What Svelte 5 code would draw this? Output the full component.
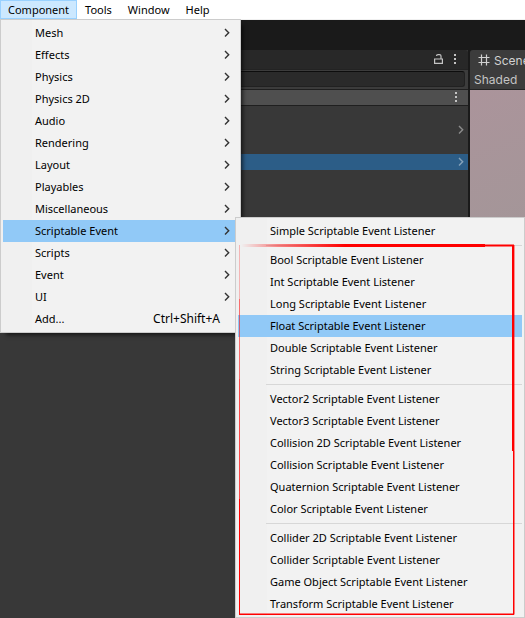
<script>
  const menuBar = ['Component', 'Tools', 'Window', 'Help'];

  const componentMenu = [
    'Mesh', 'Effects', 'Physics', 'Physics 2D', 'Audio', 'Rendering', 'Layout',
    'Playables', 'Miscellaneous', 'Scriptable Event', 'Scripts', 'Event', 'UI'
  ];

  const listenerGroups = [
    ['Simple'],
    ['Bool', 'Int', 'Long', 'Float', 'Double', 'String'],
    ['Vector2', 'Vector3', 'Collision 2D', 'Collision', 'Quaternion', 'Color'],
    ['Collider 2D', 'Collider', 'Game Object', 'Transform']
  ];

  let openItem = $state('Scriptable Event');
  let activeListener = $state('Float');
</script>

{#snippet dots()}
  <svg viewBox="0 0 4 12" width="4" height="12" aria-hidden="true">
    <path d="M1 0h2v2h-2zM1 4h2v2h-2zM1 8h2v2h-2z" fill="#c4c4c4" />
  </svg>
{/snippet}

{#snippet chevron()}
  <svg viewBox="0 0 6 10" width="6" height="10" aria-hidden="true">
    <path d="M1 1l3.700 3.700-3.700 3.700" fill="none" stroke="currentColor" stroke-width="1.400" />
  </svg>
{/snippet}

<div class="editor">
  <nav class="menubar" aria-label="Main menu">
    {#each menuBar as name}
      <button type="button" class:open={name === 'Component'}>{name}</button>
    {/each}
  </nav>

  <div class="workspace">
    <section class="hierarchy" aria-label="Hierarchy">
      <div class="tabs">
        <button type="button" aria-label="Lock">
          <svg viewBox="0 0 9 11" width="9" height="11" aria-hidden="true">
            <path d="M.6 5h7.800v4.400h-7.800zM7 5v-2.900q0-1.500-1.500-1.500h-1.500q-1.500 0-1.500 1.300" fill="none" stroke="#c4c4c4" stroke-width="1.200" />
          </svg>
        </button>
        <button type="button" aria-label="Panel options">{@render dots()}</button>
      </div>
      <div class="search"><input type="search" aria-label="Search hierarchy" /></div>
      <div class="scene-row">
        <button type="button" aria-label="Scene options">{@render dots()}</button>
      </div>
      <div class="objects">
        <div class="object"></div>
        <div class="object">{@render chevron()}</div>
        <div class="object"></div>
        <div class="object selected">{@render chevron()}</div>
      </div>
    </section>

    <section class="scene" aria-label="Scene view">
      <div class="scene-tab">
        <svg viewBox="0 0 12 12" width="12" height="12" aria-hidden="true">
          <path d="M3.500 .5v11M8.500 .5v11M.5 3.500h11M.5 8.500h11" fill="none" stroke="#d0d0d0" stroke-width="1.200" />
        </svg>
        <span>Scene</span>
      </div>
      <div class="shading">Shaded</div>
      <div class="view"></div>
    </section>
  </div>

  <div class="menu component-menu" role="menu">
    {#each componentMenu as name}
      <button type="button" role="menuitem" class:active={name === openItem} onclick={() => (openItem = name)}>
        <span>{name}</span>
        <span class="arrow">{@render chevron()}</span>
      </button>
    {/each}
    <button type="button" role="menuitem">
      <span>Add...</span>
      <span class="shortcut">Ctrl+Shift+A</span>
    </button>
  </div>

  <div class="menu listener-menu" role="menu">
    {#each listenerGroups as group, i}
      {#if i > 0}<hr />{/if}
      {#each group as kind}
        <button type="button" role="menuitem" class:active={kind === activeListener} onclick={() => (activeListener = kind)}>
          <span>{kind} Scriptable Event Listener</span>
        </button>
      {/each}
    {/each}
    <svg class="marker" viewBox="0 0 290 401" preserveAspectRatio="none" aria-hidden="true">
      <defs>
        <linearGradient id="fade" gradientUnits="userSpaceOnUse" x1="6" y1="0" x2="110" y2="0">
          <stop offset="0" stop-color="#f00" stop-opacity="0" />
          <stop offset="0.350" stop-color="#f00" stop-opacity="0.450" />
          <stop offset="1" stop-color="#f00" />
        </linearGradient>
      </defs>
      <path d="M6 27h244v3h-244z" fill="url(#fade)" />
      <path d="M250 27.500h29v2h-29zM277 28h2v206h-2z" fill="#f00" />
      <path d="M279 28h1v206h-1z" fill="#f00" opacity="0.400" />
      <path d="M278 234h1.500v163.500h-1.500z" fill="#f00" />
      <path d="M4 396.500h275v1.500h-275z" fill="#f00" />
      <path d="M4 28h1v54h-1z" fill="#f00" opacity="0.250" />
      <path d="M4 82h1v80h-1z" fill="#f00" opacity="0.550" />
      <path d="M4 162h1v120h-1z" fill="#f00" opacity="0.700" />
      <path d="M4 282h1v115h-1z" fill="#f00" />
    </svg>
  </div>
</div>

<style>
  :global(body) {
    margin: 0;
    background: #383838;
  }

  .editor {
    position: relative;
    display: flex;
    flex-direction: column;
    min-height: 100vh;
    overflow: hidden;
    background: #1a1a1a;
    font-family: "Noto Sans", "Open Sans", sans-serif;
    font-size: 11px;
    line-height: 16px;
  }

  button {
    box-sizing: border-box;
    margin: 0;
    padding: 0;
    border: 0;
    background: none;
    color: #000;
    font: inherit;
  }

  svg {
    display: block;
  }

  .menubar {
    display: flex;
    height: 19px;
    background: #fff;
    border-bottom: 1px solid #f0f0f0;
  }

  .menubar button {
    padding: 0 8px;
  }

  .menubar .open {
    background: #cce8ff;
    border: 1px solid #99d1ff;
    padding: 0 7px;
  }

  .workspace {
    display: flex;
    flex: 1;
    gap: 2px;
    padding-top: 30px;
  }

  .hierarchy {
    display: flex;
    flex: 1;
    flex-direction: column;
    background: #383838;
  }

  .tabs {
    display: flex;
    align-items: center;
    justify-content: flex-end;
    gap: 10px;
    height: 19px;
    padding-right: 11px;
    background: #282828;
    border-radius: 0 3px 0 0;
  }

  .search {
    display: flex;
    height: 18px;
    padding: 1px 3px 0;
    background: #3c3c3c;
    border-top: 1px solid #232323;
  }

  .search input {
    box-sizing: border-box;
    flex: 1;
    height: 16px;
    background: #2a2a2a;
    border: 1px solid #212121;
    border-top-color: #0d0d0d;
    border-radius: 3px;
    color: #d2d2d2;
    font: inherit;
  }

  .scene-row {
    display: flex;
    align-items: center;
    justify-content: flex-end;
    height: 15px;
    padding-right: 10px;
    background: #4f4f4f;
    border-top: 1px solid #1f1f1f;
    border-bottom: 1px solid #1f1f1f;
  }

  .object {
    display: flex;
    align-items: center;
    justify-content: flex-end;
    height: 16px;
    padding-right: 4px;
    color: #8c8c8c;
  }

  .selected {
    background: #2c5d87;
    color: #86a2ba;
  }

  .scene {
    display: flex;
    flex: 0 0 55px;
    flex-direction: column;
    overflow: hidden;
    background: #3c3c3c;
    border-radius: 3px 0 0 0;
    color: #d2d2d2;
    font-family: Inter, Roboto, sans-serif;
    font-size: 12px;
  }

  .scene-tab {
    display: flex;
    align-items: center;
    gap: 4px;
    height: 20px;
    padding-left: 8px;
    line-height: 18px;
  }

  .scene-tab svg {
    flex: none;
  }

  .scene-tab span {
    padding-top: 2px;
  }

  .shading {
    height: 19px;
    padding-left: 4px;
    line-height: 20px;
    border-bottom: 1px solid #232323;
    color: #c4c4c4;
  }

  .view {
    flex: 1;
    background: linear-gradient(160deg, #ab949b 0, #a39698 160px, #999 400px);
  }

  .menu {
    position: absolute;
    box-sizing: border-box;
    display: flex;
    flex-direction: column;
    padding: 2px;
    border: 1px solid #ccc;
    background: linear-gradient(to right, #f0f0f0 31px, #f2f2f2 31px);
  }

  .menu button {
    display: flex;
    align-items: center;
    justify-content: space-between;
    height: 22px;
    padding: 0 8px 0 32px;
    text-align: left;
    white-space: nowrap;
  }

  .menu .active {
    background: #91c9f7;
  }

  .component-menu {
    top: 19px;
    left: 0;
    width: 241px;
    box-shadow: 4px 4px 4px -2px rgba(0, 0, 0, 0.6);
  }

  .arrow {
    color: #333;
  }

  .shortcut {
    padding-right: 10px;
    font-size: 12px;
  }

  .listener-menu {
    top: 217px;
    left: 235px;
    right: 0;
  }

  hr {
    box-sizing: border-box;
    width: auto;
    height: 7px;
    margin: 0 0 0 28px;
    border: 3px solid transparent;
    border-width: 3px 0;
    background: #d7d7d7;
    background-clip: padding-box;
  }

  .marker {
    position: absolute;
    top: -1px;
    left: -1px;
    width: calc(100% + 2px);
    height: calc(100% + 2px);
    pointer-events: none;
  }
</style>
